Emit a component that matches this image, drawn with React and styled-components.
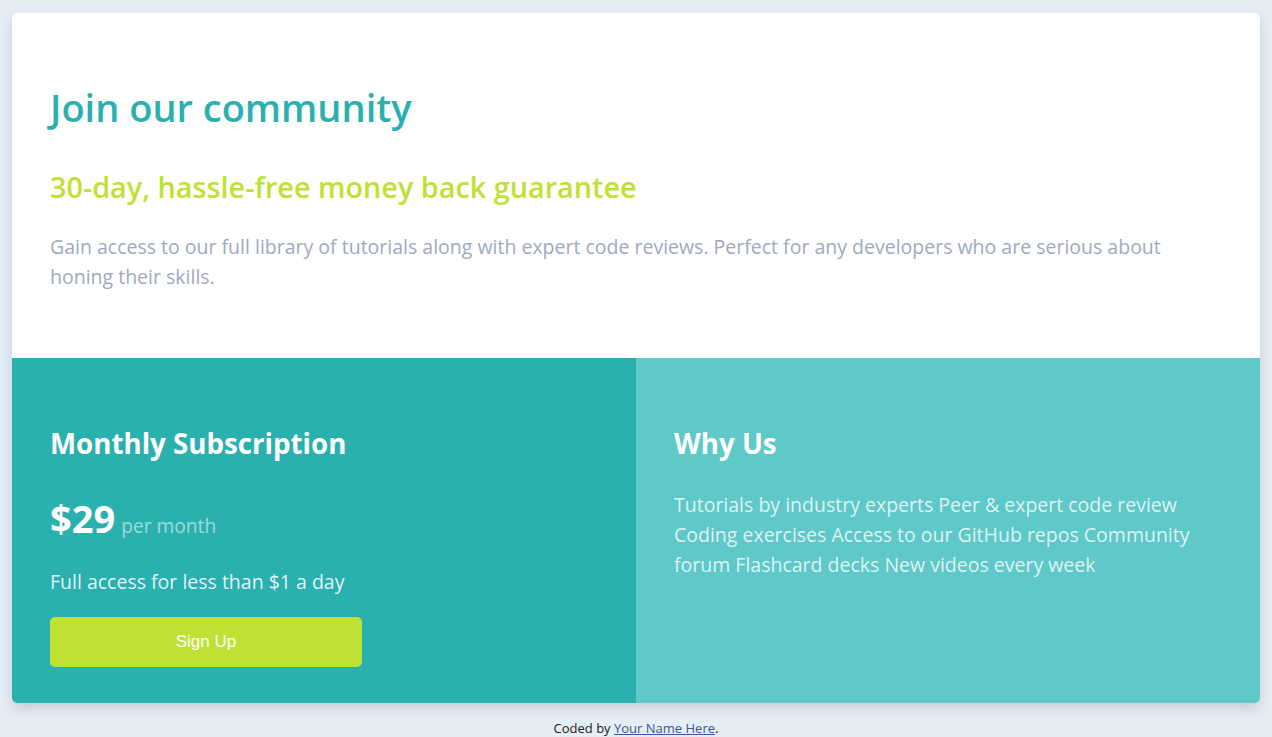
import React from 'react';
import styled, { createGlobalStyle } from 'styled-components';

const colors = {
  page: '#e5edf5',
  cyan: '#2bb0b0',
  cyanLight: '#5fc8c8',
  lime: '#bfe135',
  grayBlue: '#a0a9c0',
  white: '#ffffff',
};

const GlobalStyle = createGlobalStyle`
  html, body {
    margin: 0;
    background: ${colors.page};
    font-family: 'Open Sans', 'Noto Sans', sans-serif;
  }
`;

const Page = styled.main`
  padding: 13px 12px 0;
`;

const Card = styled.article`
  background: ${colors.white};
  border-radius: 5px;
  overflow: hidden;
  box-shadow: 0 6px 12px rgba(60, 80, 110, 0.18);
`;

const Intro = styled.section`
  padding: 70px 38px 66px;
`;

const Title = styled.h1`
  margin: 0;
  font-size: 38px;
  line-height: 48px;
  font-weight: 600;
  color: ${colors.cyan};
`;

const Guarantee = styled.h2`
  margin: 39px 0 0;
  font-size: 28.8px;
  line-height: 34px;
  font-weight: 600;
  color: ${colors.lime};
`;

const Lead = styled.p`
  margin: 28px 0 0;
  font-size: 19.5px;
  line-height: 30px;
  color: ${colors.grayBlue};
`;

const Columns = styled.div`
  display: grid;
  grid-template-columns: 1fr 1fr;
`;

const Panel = styled.section`
  background: ${props => props.light ? colors.cyanLight : colors.cyan};
  padding: 67px 38px 36px;
  color: ${colors.white};
`;

const PanelTitle = styled.h3`
  margin: 0;
  font-size: 27.7px;
  line-height: 36px;
  font-weight: 700;
`;

const PriceRow = styled.div`
  margin-top: 35px;
  display: flex;
  align-items: baseline;
  gap: 6px;
  line-height: 44px;
`;

const Price = styled.span`
  font-size: 38px;
  font-weight: 700;
`;

const Period = styled.span`
  font-size: 19.2px;
  color: rgba(255, 255, 255, 0.55);
`;

const Note = styled.p`
  margin: 19px 0 0;
  font-size: 19.5px;
  line-height: 30px;
  color: rgba(255, 255, 255, 0.88);
`;

const SignUp = styled.button`
  margin-top: 20px;
  width: 312px;
  height: 50px;
  border: none;
  border-radius: 5px;
  background: ${colors.lime};
  color: ${colors.white};
  font-family: 'Liberation Sans', Arial, sans-serif;
  font-size: 17px;
  cursor: pointer;
`;

const Perks = styled.p`
  margin: 29px 0 0;
  font-size: 19.5px;
  line-height: 30px;
  color: rgba(255, 255, 255, 0.8);
`;

const Footer = styled.footer`
  text-align: center;
  font-size: 13px;
  line-height: 18px;
  padding-top: 16px;
  color: #222;

  a {
    color: hsl(228, 45%, 44%);
  }
`;

const App = () => (
  <Page>
    <GlobalStyle />
    <Card>
      <Intro>
        <Title>Join our community</Title>
        <Guarantee>30-day, hassle-free money back guarantee</Guarantee>
        <Lead>
          Gain access to our full library of tutorials along with expert code reviews.
          Perfect for any developers who are serious about honing their skills.
        </Lead>
      </Intro>
      <Columns>
        <Panel>
          <PanelTitle>Monthly Subscription</PanelTitle>
          <PriceRow>
            <Price>$29</Price>
            <Period>per month</Period>
          </PriceRow>
          <Note>Full access for less than $1 a day</Note>
          <SignUp>Sign Up</SignUp>
        </Panel>
        <Panel light>
          <PanelTitle>Why Us</PanelTitle>
          <Perks>
            Tutorials by industry experts Peer &amp; expert code review Coding exercises
            Access to our GitHub repos Community forum Flashcard decks New videos every week
          </Perks>
        </Panel>
      </Columns>
    </Card>
    <Footer>
      Coded by <a href="#">Your Name Here</a>.
    </Footer>
  </Page>
);

export default App;
